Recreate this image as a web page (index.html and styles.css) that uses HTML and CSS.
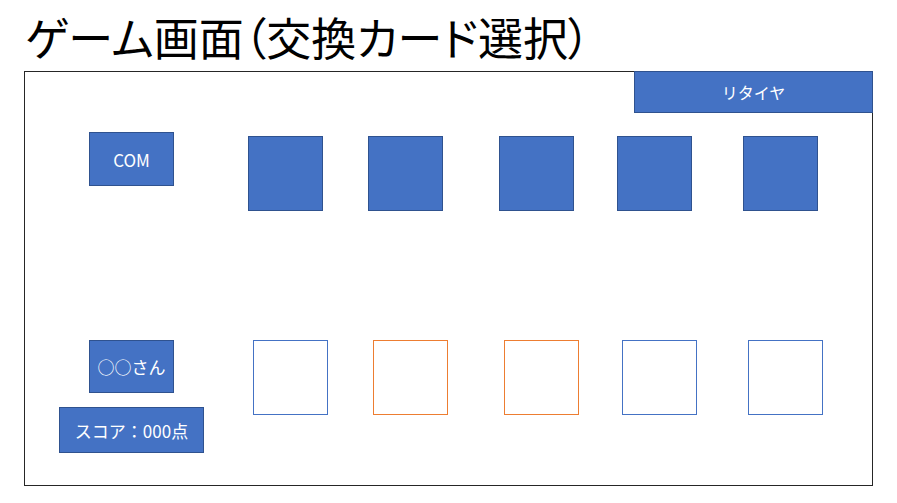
FILE: index.html
```html
<!DOCTYPE html>
<html lang="ja">
<head>
    <meta charset="UTF-8">
    <meta name="viewport" content="width=device-width, initial-scale=1.0">
    <title>ゲーム画面（交換カード選択）</title>
    <link rel="stylesheet" href="styles.css">
</head>
<body>
    <h1 class="title">ゲーム画面（交換カード選択）</h1>

    <main class="board">
        <button class="retire" type="button">リタイヤ</button>

        <div class="row row-com">
            <div class="side">
                <div class="tag tag-com">COM</div>
            </div>
            <div class="cards">
                <div class="card card-back"></div>
                <div class="card card-back"></div>
                <div class="card card-back"></div>
                <div class="card card-back"></div>
                <div class="card card-back"></div>
            </div>
        </div>

        <div class="row row-player">
            <div class="side">
                <div class="tag tag-name">○○さん</div>
                <div class="tag tag-score">スコア：000点</div>
            </div>
            <div class="cards">
                <div class="card card-open"></div>
                <div class="card card-open card-picked"></div>
                <div class="card card-open card-picked"></div>
                <div class="card card-open"></div>
                <div class="card card-open"></div>
            </div>
        </div>
    </main>
</body>
</html>
```

FILE: styles.css
```css
body {
    margin: 0;
    padding: 0;
    background-color: #fff;
    font-family: "Noto Sans CJK JP", "Noto Sans", sans-serif;
    color: #000;
}

.title {
    margin: 0;
    padding: 14px 0 0 25px;
    height: 57px;
    box-sizing: border-box;
    font-size: 45px;
    font-weight: normal;
    line-height: 46px;
    font-feature-settings: "palt";
}

.board {
    position: relative;
    width: 849px;
    height: 415px;
    margin-left: 24px;
    margin-top: 14px;
    padding: 60px 0 0 34px;
    box-sizing: border-box;
    border: 1px solid #262626;
}

.retire {
    position: absolute;
    top: -1px;
    right: -1px;
    width: 239px;
    height: 42px;
    margin: 0;
    padding: 0;
    background-color: #4472c4;
    border: 1px solid #2f528f;
    color: #fff;
    font-family: inherit;
    font-size: 16px;
    cursor: pointer;
}

.row {
    display: flex;
    align-items: flex-start;
}

.row-player {
    margin-top: 129px;
}

.side {
    width: 145px;
    display: flex;
    flex-direction: column;
    align-items: center;
    gap: 14px;
}

.tag {
    display: flex;
    align-items: center;
    justify-content: center;
    box-sizing: border-box;
    background-color: #4472c4;
    border: 1px solid #2f528f;
    color: #fff;
}

.tag-com {
    width: 85px;
    height: 54px;
    font-size: 17px;
}

.tag-name {
    width: 85px;
    height: 53px;
    font-size: 17px;
}

.tag-score {
    width: 145px;
    height: 46px;
    font-size: 17px;
}

.cards {
    display: flex;
    margin-left: 44px;
}

.row-com .cards {
    margin-top: 4px;
}

.row-player .cards {
    margin-left: 49px;
}

.card {
    width: 75px;
    height: 75px;
    box-sizing: border-box;
}

.card:nth-child(2) { margin-left: 45px; }
.card:nth-child(3) { margin-left: 56px; }
.card:nth-child(4) { margin-left: 43px; }
.card:nth-child(5) { margin-left: 51px; }

.card-back {
    background-color: #4472c4;
    border: 1px solid #2f528f;
}

.card-open {
    background-color: #fff;
    border: 1px solid #4472c4;
}

.card-picked {
    border-color: #ed7d31;
}
```
